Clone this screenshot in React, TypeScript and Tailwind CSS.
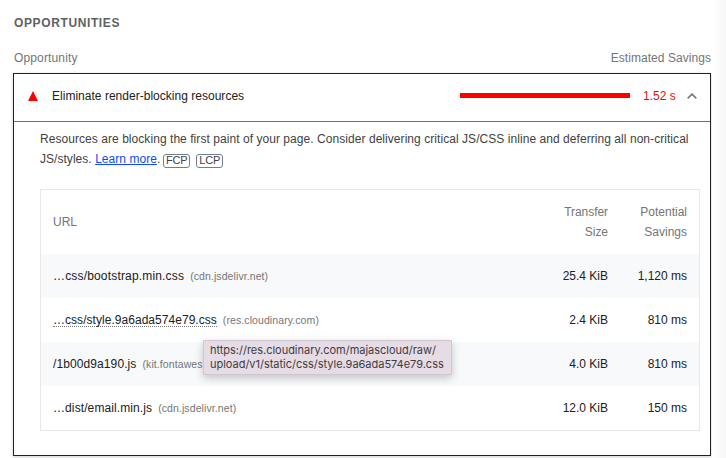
const rows = [
  { url: "…css/bootstrap.min.css", host: "(cdn.jsdelivr.net)", size: "25.4 KiB", savings: "1,120 ms", tip: false, track: "tracking-[0.17px]" },
  { url: "…css/style.9a6ada574e79.css", host: "(res.cloudinary.com)", size: "2.4 KiB", savings: "810 ms", tip: true, track: "tracking-[0.04px]" },
  { url: "/1b00d9a190.js", host: "(kit.fontawes", size: "4.0 KiB", savings: "810 ms", tip: false, track: "tracking-[0.1px]" },
  { url: "…dist/email.min.js", host: "(cdn.jsdelivr.net)", size: "12.0 KiB", savings: "150 ms", tip: false, track: "tracking-[0.1px]" },
];

function Metric({ name }: { name: string }) {
  return (
    <span className="mr-[6px] inline-block h-[14px] w-[27px] rounded-[3px] border border-[#6d7f95] text-center align-[-2px] text-[11px] leading-[11px]">
      {name}
    </span>
  );
}

function Tooltip() {
  return (
    <div className="absolute left-[162px] top-[42px] z-10 h-[35px] w-[249px] whitespace-nowrap rounded-[1px] border border-[#cfc6cf] bg-[#e6dce6] px-[6px] pt-[2px] font-['Inter'] text-[11px] leading-[14px] tracking-[-0.02px] text-[#3f3b40] shadow-[0_3px_8px_rgba(0,0,0,0.22)]">
      <div>https://res.cloudinary.com/majascloud/raw/</div>
      <div>upload/v1/static/css/style.9a6ada574e79.css</div>
    </div>
  );
}

export default function App() {
  return (
    <div className="flex h-[458px] w-[726px] overflow-hidden bg-white font-['Liberation_Sans',Arial,sans-serif] text-[12px] leading-5 text-[#212121]">
      <main className="w-[712px] shrink-0 pl-[13px] pr-px">
        <h2 className="h-[48px] pl-px pt-[13px] text-[12px] font-bold leading-5 tracking-[0.62px] text-[#616161]">OPPORTUNITIES</h2>
        <div className="flex h-[25px] justify-between pl-px text-[#757575]">
          <span className="tracking-[0.14px]">Opportunity</span>
          <span className="tracking-[0.05px]">Estimated Savings</span>
        </div>
        <section className="h-[383px] border border-[#202124] shadow-[0_1px_3px_rgba(0,0,0,0.2)]">
          <header className="flex h-[48px] items-center border-b border-b-[#3b78e7] pb-[4px] pl-[14px] pr-[13px]">
            <svg width="10" height="10" viewBox="0 0 10 10" className="mr-[14px]">
              <path d="M5 0 10 10H0Z" fill="#f00" />
            </svg>
            <span className="tracking-[0.02px]">Eliminate render-blocking resources</span>
            <div className="ml-auto h-[5px] w-[170px] bg-[#f00]" />
            <span className="ml-[13px] w-[33px] whitespace-nowrap text-[#e01010]">1.52 s</span>
            <svg width="10" height="6" viewBox="0 0 10 6" fill="none" stroke="#757575" strokeWidth="1.5" className="ml-[11px] mt-px">
              <path d="M.7 5.4 5 1.1 9.3 5.4" />
            </svg>
          </header>
          <div className="pl-[26px] pr-[10px] pt-[7px]">
            <p className="h-[60px] whitespace-nowrap text-[#424242]">
              <span className="tracking-[0.055px]">Resources are blocking the first paint of your page. Consider delivering critical JS/CSS inline and deferring all non-critical</span>
              <br />
              <span className="tracking-[0.04px]">JS/styles. <a className="text-[#0c4cff] underline">Learn more</a>. </span>
              <span className="relative -top-px -ml-[0.5px] tracking-[-0.2px]">
                <Metric name="FCP" />
                <Metric name="LCP" />
              </span>
            </p>
            <div className="border border-[#e8e8e8]">
              <div className="flex h-[64px] items-center px-3 text-[#757575]">
                <span className="flex-1">URL</span>
                <span className="w-[79px] text-right tracking-[-0.05px]">Transfer<br />Size</span>
                <span className="w-[79px] text-right">Potential<br />Savings</span>
              </div>
              {rows.map((r) => (
                <div key={r.url} className="relative flex h-[44px] items-center whitespace-nowrap px-3 odd:bg-white even:bg-[#f8f9fb]">
                  <div className="flex flex-1 items-center">
                    <span className={r.track}>
                      <span className={r.tip ? "block h-[14px] border-b border-dotted border-[#777] leading-[14px]" : "block leading-5"}>{r.url}</span>
                    </span>
                    <span className="ml-[6px] text-[10.5px] tracking-[0.09px] text-[#757575]">{r.host}</span>
                  </div>
                  <span className="w-[79px] text-right">{r.size}</span>
                  <span className="w-[79px] text-right">{r.savings}</span>
                  {r.tip && <Tooltip />}
                </div>
              ))}
            </div>
          </div>
        </section>
      </main>
      <aside className="flex-1 bg-linear-to-r from-white to-[#f7f7f7]" />
    </div>
  );
}
